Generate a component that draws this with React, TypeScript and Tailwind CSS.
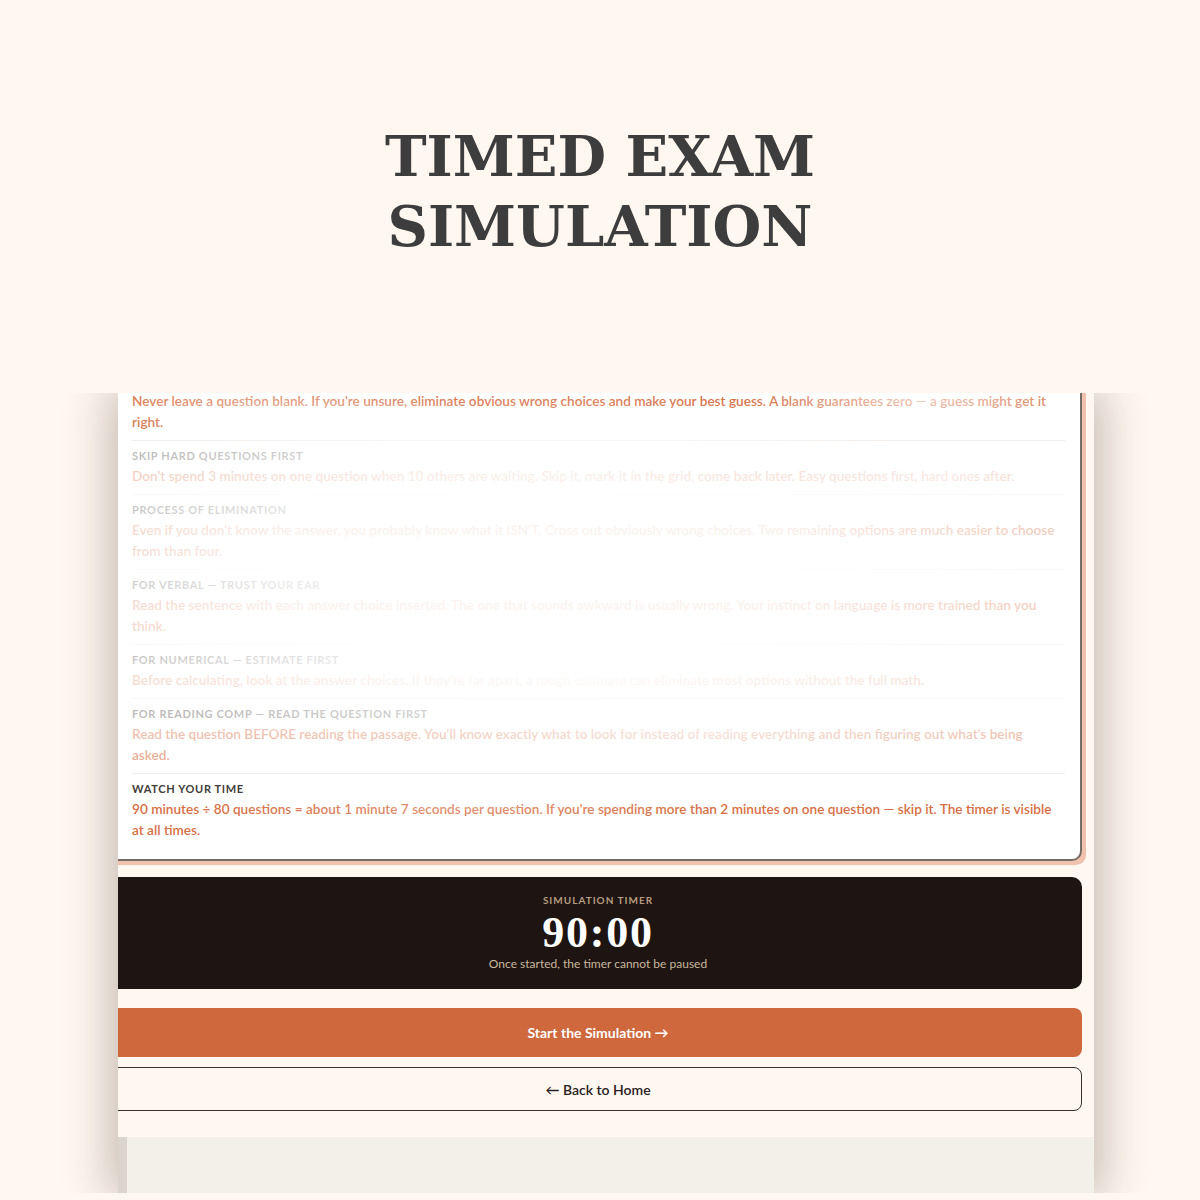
const tips = [
  {
    title: "",
    body: "Never leave a question blank. If you're unsure, eliminate obvious wrong choices and make your best guess. A blank guarantees zero — a guess might get it right.",
  },
  {
    title: "Skip hard questions first",
    body: "Don't spend 3 minutes on one question when 10 others are waiting. Skip it, mark it in the grid, come back later. Easy questions first, hard ones after.",
  },
  {
    title: "Process of elimination",
    body: "Even if you don't know the answer, you probably know what it ISN'T. Cross out obviously wrong choices. Two remaining options are much easier to choose from than four.",
  },
  {
    title: "For verbal — trust your ear",
    body: "Read the sentence with each answer choice inserted. The one that sounds awkward is usually wrong. Your instinct on language is more trained than you think.",
  },
  {
    title: "For numerical — estimate first",
    body: "Before calculating, look at the answer choices. If they're far apart, a rough estimate can eliminate most options without the full math.",
  },
  {
    title: "For reading comp — read the question first",
    body: "Read the question BEFORE reading the passage. You'll know exactly what to look for instead of reading everything and then figuring out what's being asked.",
  },
  {
    title: "Watch your time",
    body: "90 minutes ÷ 80 questions = about 1 minute 7 seconds per question. If you're spending more than 2 minutes on one question — skip it. The timer is visible at all times.",
  },
]

function TipsCard() {
  return (
    <div className="relative -mt-[20px] rounded-br-[10px] border-2 border-t-0 border-[#786c66] bg-white pt-[18px] pb-[18px] pl-[16px] pr-[15px] shadow-[4px_4px_0_#f0c2ad]">
      {tips.map((tip, i) => (
        <div
          key={i}
          className={
            i === tips.length - 1
              ? "pt-[7px]"
              : i === 0
              ? "pb-[7px] border-b border-[#f1ece8]"
              : "pt-[7px] pb-[7px] border-b border-[#f1ece8]"
          }
        >
          {tip.title && (
            <p className="text-[11px] leading-[16px] font-bold uppercase tracking-[0.06em] text-[#423d3a]">
              {tip.title}
            </p>
          )}
          <p className={`${tip.title ? "mt-[2px]" : ""} pr-[7px] text-[13.6px] leading-[21px] font-semibold text-[#d76f45]`}>
            {tip.body}
          </p>
        </div>
      ))}
      {/* washed-out glare over the card */}
      <div className="pointer-events-none absolute inset-0 bg-[linear-gradient(to_bottom,rgba(255,255,255,0)_0px,rgba(255,255,255,0)_66px,rgba(255,255,255,0.65)_76px,rgba(255,255,255,0.65)_350px,rgba(255,255,255,0.4)_390px,rgba(255,255,255,0)_405px)]" />
      <div className="pointer-events-none absolute inset-0 bg-[radial-gradient(520px_190px_at_420px_200px,rgba(255,255,255,0.8),rgba(255,255,255,0.7)_50%,rgba(255,255,255,0)),radial-gradient(700px_30px_at_486px_306px,rgba(255,255,255,0.75),rgba(255,255,255,0)),radial-gradient(200px_24px_at_836px_103px,rgba(255,255,255,0.6),rgba(255,255,255,0)),radial-gradient(200px_30px_at_156px_38px,rgba(255,255,255,0.5),rgba(255,255,255,0)),radial-gradient(190px_22px_at_806px_28px,rgba(255,255,255,0.65),rgba(255,255,255,0)),radial-gradient(330px_26px_at_606px_360px,rgba(255,255,255,0.5),rgba(255,255,255,0)),radial-gradient(260px_14px_at_336px_435px,rgba(255,255,255,0.3),rgba(255,255,255,0))]" />
    </div>
  )
}

export default function App() {
  return (
    <div className="flex h-[1200px] w-[1200px] flex-col bg-[#fff7f0] font-['Lato','Noto_Sans',sans-serif]">
      <div className="relative z-10 flex h-[393px] shrink-0 justify-center bg-[#fff7f0] pt-[121px]">
        <h1 className="text-center font-['DejaVu_Serif',serif] text-[56px] leading-[70px] font-bold text-[#3d3d3d]">
          TIMED EXAM
          <br />
          SIMULATION
        </h1>
      </div>

      <div className="ml-[118px] flex h-[800px] w-[976px] shrink-0 flex-col overflow-hidden bg-[#fff7f0] shadow-[0_0_45px_6px_rgba(60,45,30,0.32)]">
        <div className="-ml-[4px] w-[968px]">
          <TipsCard />

          <div className="mt-[16px] flex h-[112px] flex-col items-center rounded-r-[10px] bg-[#1e1411] pt-[16px]">
            <p className="text-[10px] leading-[14px] font-bold uppercase tracking-[0.1em] text-[#b59d80]">
              Simulation Timer
            </p>
            <p className="mt-[1px] font-['Liberation_Serif',serif] text-[44px] leading-[50px] font-bold tracking-[0.04em] text-white">
              90:00
            </p>
            <p className="text-[12px] leading-[12px] text-[#c9b89f]">
              Once started, the timer cannot be paused
            </p>
          </div>

          <button className="mt-[19px] flex h-[49px] w-full items-center justify-center rounded-r-[8px] bg-[#cf683d] text-[14px] font-bold text-white">
            Start the Simulation →
          </button>

          <button className="mt-[10px] flex h-[44px] w-full items-center justify-center rounded-r-[8px] border-[1.5px] border-[#3a302c] bg-[#fff7f0] text-[14px] font-semibold text-[#2a201c]">
            ← Back to Home
          </button>
        </div>

        <div className="mt-[26px] flex flex-1">
          <div className="w-[9px] bg-[#dad4cc]" />
          <div className="flex-1 bg-[#f3f0ea]" />
        </div>
      </div>

      <div className="relative z-10 flex-1 bg-[#fff7f0]" />
    </div>
  )
}
